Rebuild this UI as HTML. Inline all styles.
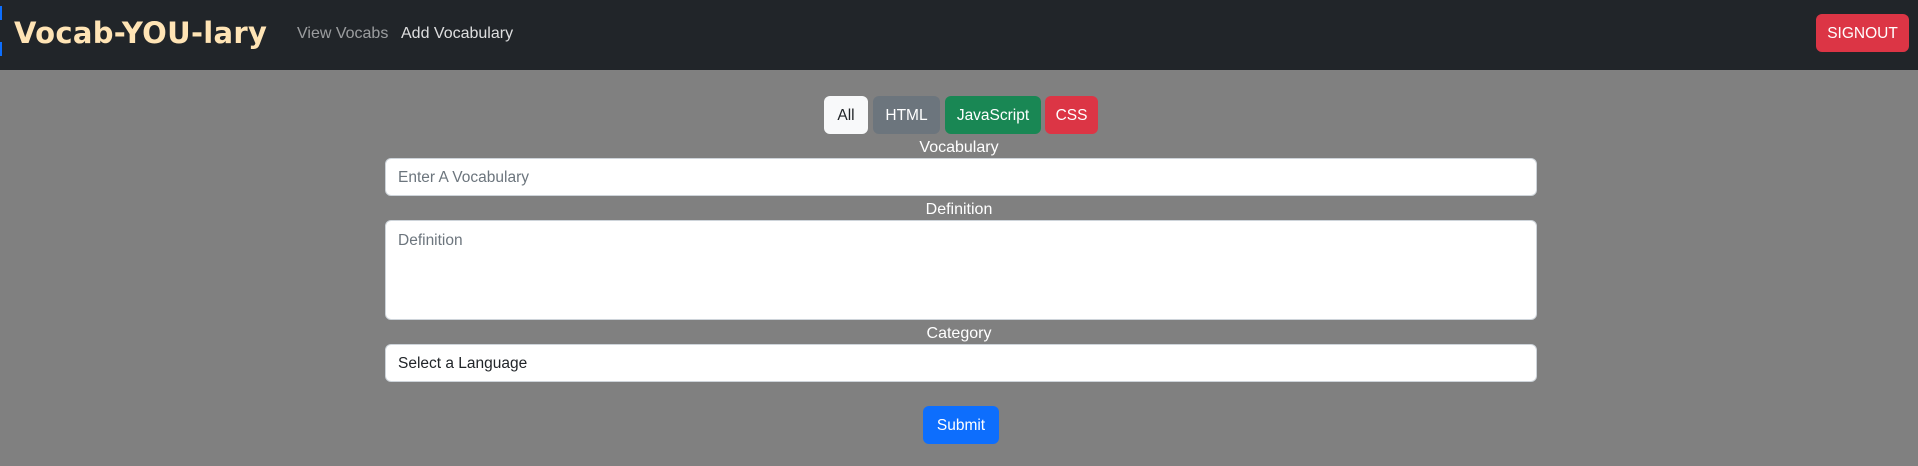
<!DOCTYPE html>
<html><head><meta charset="utf-8"><style>
*{box-sizing:border-box;margin:0;padding:0}
body{width:1918px;height:466px;background:#808080;font-family:"Liberation Sans",sans-serif;font-size:16px;position:relative;overflow:hidden}
.nav{position:absolute;left:0;top:0;width:1918px;height:70px;background:#212529}
.edge{position:absolute;left:0;width:2px;background:#0d6efd}
.brand{position:absolute;left:14px;top:16px;font-family:"DejaVu Sans",sans-serif;font-weight:bold;font-size:29px;color:#ffe4b5;letter-spacing:0.3px}
.link{position:absolute;top:25px;font-size:16px}
.btn{position:absolute;border-radius:6px;color:#fff;display:flex;align-items:center;justify-content:center;font-size:15.5px;padding-top:2px}
.lbl{position:absolute;left:0;width:1918px;text-align:center;color:#fff;font-size:16px}
.inp{position:absolute;left:385px;width:1152px;background:#fff;border:1px solid #ced4da;border-radius:6px;padding:2px 12px 0;color:#6c757d;display:flex;align-items:center;font-size:15.5px}
</style></head><body>
<div class="nav">
<div class="edge" style="top:6px;height:14px"></div>
<div class="edge" style="top:42px;height:14px"></div>
<div class="brand">Vocab-YOU-lary</div>
<div class="link" style="left:297px;color:rgba(255,255,255,.55)">View Vocabs</div>
<div class="link" style="left:401px;color:rgba(255,255,255,.85)">Add Vocabulary</div>
<div class="btn" style="left:1816px;top:14px;width:93px;height:38px;background:#dc3545">SIGNOUT</div>
</div>
<div class="btn" style="left:824px;top:96px;width:44px;height:38px;background:#f8f9fa;color:#212529">All</div>
<div class="btn" style="left:873px;top:96px;width:67px;height:38px;background:#6c757d">HTML</div>
<div class="btn" style="left:945px;top:96px;width:96px;height:38px;background:#198754">JavaScript</div>
<div class="btn" style="left:1045px;top:96px;width:53px;height:38px;background:#dc3545">CSS</div>
<div class="lbl" style="top:139px">Vocabulary</div>
<div class="inp" style="top:158px;height:38px">Enter A Vocabulary</div>
<div class="lbl" style="top:201px">Definition</div>
<div class="inp" style="top:220px;height:100px;align-items:flex-start;padding-top:11px">Definition</div>
<div class="lbl" style="top:325px">Category</div>
<div class="inp" style="top:344px;height:38px;color:#212529">Select a Language</div>
<div class="btn" style="left:923px;top:406px;width:76px;height:38px;background:#0d6efd">Submit</div>
</body></html>
